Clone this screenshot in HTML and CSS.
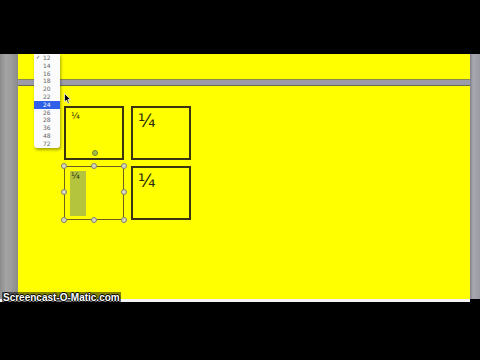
FILE: index.html
```html
<!DOCTYPE html>
<html>
<head>
<meta charset="utf-8">
<link rel="stylesheet" href="styles.css">
</head>
<body>
<div class="screen">
  <div class="topbar"></div>
  <div class="app">
    <div class="lgray"></div>
    <div class="main">
      <div class="panel-top"></div>
      <div class="sep"></div>
      <div class="canvas">
        <div class="grid">
          <div class="box"><span class="frac small">¼</span><span class="rot"></span></div>
          <div class="box"><span class="frac big">¼</span></div>
          <div class="box selected">
            <span class="hl"></span>
            <span class="frac small">¼</span>
            <span class="h tl"></span><span class="h tm"></span><span class="h tr"></span>
            <span class="h ml"></span><span class="h mr"></span>
            <span class="h bl"></span><span class="h bm"></span><span class="h br"></span>
          </div>
          <div class="box"><span class="frac big">¼</span></div>
        </div>
      </div>
    </div>
    <div class="rgray"></div>
  </div>
  <div class="whiteline"></div>
  <div class="bottom"></div>

  <ul class="menu">
    <li class="checked">12</li>
    <li>14</li><li>16</li><li>18</li><li>20</li><li>22</li>
    <li class="sel">24</li>
    <li>26</li><li>28</li><li>36</li><li>48</li><li>72</li>
  </ul>

  <svg class="cursor" width="8" height="12" viewBox="0 0 8 12">
    <path d="M0.5 0.5 L0.5 9 L2.5 7 L4 10.5 L5.3 10 L3.8 6.6 L6.5 6.6 Z" fill="#000" stroke="#fff" stroke-width="0.7"/>
  </svg>

  <div class="watermark">Screencast-O-Matic.com</div>
</div>
</body>
</html>
```
FILE: styles.css
```css
html, body { margin: 0; padding: 0; }
body { background: #000; width: 480px; height: 360px; overflow: hidden; font-family: "DejaVu Sans", sans-serif; }
.screen { position: relative; width: 480px; height: 360px; display: flex; flex-direction: column; }
.topbar { height: 54px; background: #000; }
.app { height: 245px; display: flex; }
.lgray { width: 18px; background: linear-gradient(90deg, #8c8c8c 0, #a4a4a4 6px, #9a9a9a 12px, #8a8a8a 18px); }
.rgray { width: 10px; background: linear-gradient(90deg, #7e7e86 0, #a8a8b0 3px, #9a9aa2 10px); }
.main { flex: 1; display: flex; flex-direction: column; }
.panel-top { height: 25px; background: #ffff00; border-bottom: 1px solid #8a8a50; }
.sep { height: 5px; background: #9c9ca8; border-bottom: 1px solid #6a6a50; }
.canvas { flex: 1; background: #ffff00; padding: 20px 0 0 46px; }
.grid { display: grid; grid-template-columns: 60px 60px; grid-template-rows: 54px 54px; column-gap: 7px; row-gap: 6px; }
.box { position: relative; box-sizing: border-box; border: 2px solid #3a3410; }
.selected { border-color: #6a6420; border-width: 1px; }
.frac { position: absolute; color: #2a2a10; font-family: "DejaVu Sans", sans-serif; line-height: 1; }
.small { left: 5px; top: 4px; font-size: 9px; }
.big { left: 5px; top: 4px; font-size: 18px; }
.hl { position: absolute; left: 5px; top: 4px; width: 16px; height: 45px; background: #b4c43c; }
.selected .small { left: 6px; top: 5px; }
.h, .rot { position: absolute; width: 4px; height: 4px; border-radius: 50%; background: #d8d8c0; border: 1px solid #808070; }
.rot { left: 26px; bottom: 2px; background: #a8c040; border-color: #708040; }
.tl { left: -4px; top: -4px; } .tm { left: 26px; top: -4px; } .tr { right: -4px; top: -4px; }
.ml { left: -4px; top: 22px; } .mr { right: -4px; top: 22px; }
.bl { left: -4px; bottom: -4px; } .bm { left: 26px; bottom: -4px; } .br { right: -4px; bottom: -4px; }
.whiteline { height: 3px; background: #f4f4f4; width: 470px; }
.bottom { flex: 1; background: #000; }
.menu { position: absolute; left: 34px; top: 54px; width: 26px; height: 94px; margin: 0; padding: 0; list-style: none; background: #fbfbfb; box-shadow: 1px 2px 3px rgba(0,0,0,0.35); border-radius: 0 0 3px 3px; }
.menu li { height: 7.8px; line-height: 7.8px; font-size: 6px; color: #666; padding-left: 9px; position: relative; }
.menu li.sel { background: #3060e8; color: #fff; }
.menu li.checked::before { content: "✓"; position: absolute; left: 2px; font-size: 5px; color: #333; }
.cursor { position: absolute; left: 64px; top: 93px; }
.watermark { position: absolute; left: 2px; top: 292px; font-family: "Liberation Sans", sans-serif; font-weight: bold; font-size: 10px; color: #fff; background: rgba(0,0,0,0.5); padding: 0 1px; line-height: 12px; text-shadow: 1px 0 0 #000, -1px 0 0 #000, 0 1px 0 #000, 0 -1px 0 #000; }
```
